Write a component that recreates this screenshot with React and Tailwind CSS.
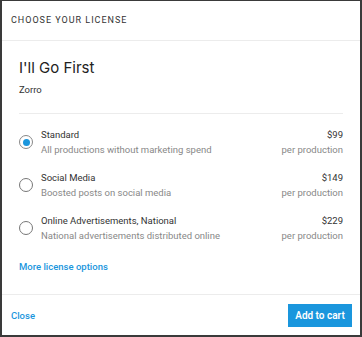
export default function App() {
  const options = [
    { title: "Standard", desc: "All productions without marketing spend", price: "$99", selected: true },
    { title: "Social Media", desc: "Boosted posts on social media", price: "$149" },
    { title: "Online Advertisements, National", desc: "National advertisements distributed online", price: "$229" },
  ];
  return (
    <div className="w-[362px] h-[337px] bg-white border-x-2 border-b-2 border-t border-[#3a3a3a] flex flex-col" style={{ fontFamily: "Roboto, 'Liberation Sans', sans-serif" }}>
      <div className="h-[40px] border-b border-[#ececec] flex items-center px-[9px] shrink-0">
        <span className="text-[9px] tracking-[0.11em] text-[#333]">CHOOSE YOUR LICENSE</span>
      </div>
      <div className="px-[17px] flex-1 flex flex-col">
        <div className="pt-[17px] text-[15px] leading-[20px] text-[#222]" style={{ fontFamily: "Inter, sans-serif" }}>I'll Go First</div>
        <div className="pt-[5px] text-[9.5px] leading-[14px] text-[#333]">Zorro</div>
        <div className="mt-[16px] border-b border-[#ececec]" />
        <div className="pt-[14px] flex flex-col gap-[15px]">
          {options.map((o) => (
            <div key={o.title} className="flex items-center">
              <div className={`w-[14px] h-[14px] rounded-full border flex items-center justify-center shrink-0 ${o.selected ? "border-[#888]" : "border-[#777]"}`}>
                {o.selected && <div className="w-[7px] h-[7px] rounded-full bg-[#1a96dd]" />}
              </div>
              <div className="ml-[8px] flex-1 flex flex-col gap-[2px]">
                <div className="text-[9.5px] leading-[13px] text-[#333]">{o.title}</div>
                <div className="text-[9.5px] leading-[13px] text-[#888]">{o.desc}</div>
              </div>
              <div className="flex flex-col items-end gap-[2px]">
                <div className="text-[9.5px] leading-[13px] text-[#333]">{o.price}</div>
                <div className="text-[9.5px] leading-[13px] text-[#888]">per production</div>
              </div>
            </div>
          ))}
        </div>
        <div className="pt-[18px] text-[9.5px] leading-[13px] font-medium text-[#1a96dd]">More license options</div>
      </div>
      <div className="h-[41px] border-t border-[#ececec] flex items-center justify-between pl-[9px] pr-[8px] shrink-0">
        <span className="text-[9.5px] font-medium text-[#1a96dd] pt-[2px]">Close</span>
        <button className="h-[23px] w-[64px] bg-[#1a96dd] text-white text-[10px] font-semibold">Add to cart</button>
      </div>
    </div>
  );
}
